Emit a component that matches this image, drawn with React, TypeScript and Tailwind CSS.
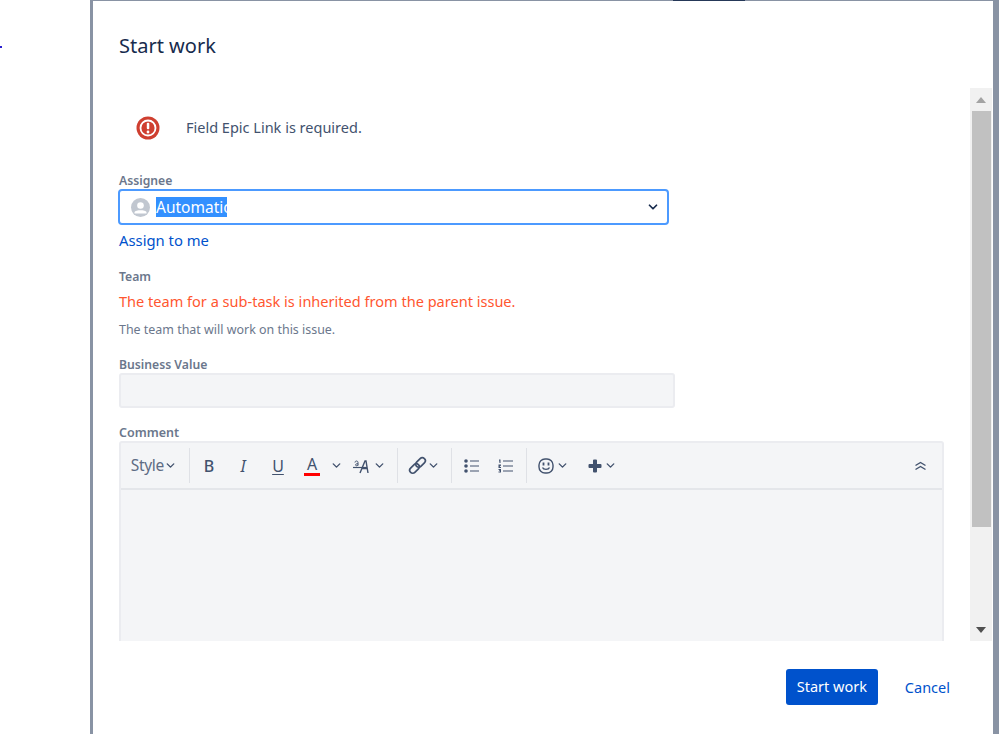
import { ChevronDown } from 'lucide-react'

const font = { fontFamily: '"Noto Sans", "Open Sans", sans-serif' }

function Chev({ className = '' }: { className?: string }) {
  return <ChevronDown className={`w-[13px] h-[13px] text-[#42526e] ${className}`} strokeWidth={2.6} />
}

function Sep() {
  return <div className="w-[1px] h-[35px] bg-[#dfe1e6]" />
}

function Toolbar() {
  return (
    <div className="h-[47px] flex items-center border-b-2 border-[#e4e6ea] text-[#42526e]">
      <div className="w-[68px] flex items-center justify-end pr-[12px]">
        <span className="text-[15.500px] text-[#5e6c84] tracking-[-0.3px]">Style</span>
        <Chev />
      </div>
      <Sep />
      <div className="w-[38px] text-center text-[16px] font-medium">B</div>
      <div className="w-[30px] text-center text-[16px] italic">I</div>
      <div className="w-[40px] text-center text-[16px] underline underline-offset-2">U</div>
      <div className="flex flex-col items-center w-[28px]">
        <span className="text-[16px] leading-[18px]">A</span>
        <div className="w-[16px] h-[3px] bg-[#ff0000]" />
      </div>
      <Chev className="ml-[4px]" />
      <div className="ml-[9px] w-[24px] flex items-center">
        <svg width="24" height="18" viewBox="0 0 24 18" fill="none" stroke="#42526e">
          <path d="M3 5.500c0-2 3-2 3 0v3M6 6.800c-3-.5-3 2-1.400 2 .7 0 1.400-.5 1.400-1" strokeWidth="1" />
          <path d="M1 10.500h14" strokeWidth="1.200" />
          <path d="M8 16l5-12h1l2 12M10 11.500h5" strokeWidth="1.400" />
        </svg>
      </div>
      <Chev className="-ml-[3px]" />
      <div className="ml-[11px]"><Sep /></div>
      <svg className="ml-[10px]" width="19" height="19" viewBox="0 0 19 19" fill="none" stroke="#42526e" strokeWidth="1.700">
        <rect x="1" y="9.500" width="11" height="6" rx="3" transform="rotate(-45 6.500 12.500)" />
        <rect x="7" y="3.500" width="11" height="6" rx="3" transform="rotate(-45 12.500 6.500)" />
      </svg>
      <Chev />
      <div className="ml-[11px]"><Sep /></div>
      <svg className="ml-[12px]" width="16" height="14" viewBox="0 0 16 14" fill="#42526e">
        <circle cx="2" cy="2" r="1.800" />
        <circle cx="2" cy="7" r="1.800" />
        <circle cx="2" cy="12" r="1.800" />
        <path d="M6 1.500h9v1H6zM6 6.500h9v1H6zM6 11.500h9v1H6z" />
      </svg>
      <svg className="ml-[18px]" width="16" height="14" viewBox="0 0 16 14" fill="#42526e">
        <path d="M1 .5h1.500v3.500h-1zM0.500 5.500h2.500v1l-1.500 1.500h1.500v1H.5zM.5 10h2.500v3.500H.5v-1h1.500v-.4H1v-.8h1v-.3H.5z" />
        <path d="M5 1.500h10v1H5zM5 6.500h10v1H5zM5 11.500h10v1H5z" />
      </svg>
      <div className="ml-[12px]"><Sep /></div>
      <svg className="ml-[11px]" width="16" height="16" viewBox="0 0 16 16" fill="none" stroke="#42526e" strokeWidth="1.400">
        <rect x="1" y="1" width="14" height="14" rx="6" />
        <path d="M5.500 4.500v3M10.500 4.500v3" strokeWidth="1.800" />
        <path d="M4.500 9.500c1 2.500 6 2.500 7 0" />
      </svg>
      <Chev className="ml-[2px]" />
      <svg className="ml-[19px]" width="14" height="14" viewBox="0 0 14 14" fill="#42526e">
        <path d="M5 1.500a1 1 0 0 1 1-1h2a1 1 0 0 1 1 1V5h3.500a1 1 0 0 1 1 1v2a1 1 0 0 1-1 1H9v3.500a1 1 0 0 1-1 1H6a1 1 0 0 1-1-1V9H1.500a1 1 0 0 1-1-1V6a1 1 0 0 1 1-1H5z" />
      </svg>
      <Chev className="ml-[2px]" />
      <div className="ml-auto mr-[15px]">
        <svg width="13" height="10" viewBox="0 0 13 10" fill="none" stroke="#42526e" strokeWidth="1.400">
          <path d="M1.500 4.500L6.500 1.500l5 3M1.500 8.500l5-3 5 3" />
        </svg>
      </div>
    </div>
  )
}

function Scrollbar() {
  return (
    <div className="w-[22px] h-full bg-[#f1f1f1] flex flex-col items-center">
      <div className="h-[23px] flex items-center justify-center">
        <div className="w-0 h-0 border-x-[5px] border-x-transparent border-b-[6px] border-b-[#a3a3a3]" />
      </div>
      <div className="w-[19px] h-[416px] bg-[#c1c1c1]" />
      <div className="mt-auto h-[23px] flex items-center justify-center">
        <div className="w-0 h-0 border-x-[5px] border-x-transparent border-t-[6px] border-t-[#505050]" />
      </div>
    </div>
  )
}

export default function App() {
  return (
    <div className="w-[999px] h-[734px] bg-white flex overflow-hidden relative" style={font}>
      <div className="w-[90px] h-full relative">
        <div className="absolute left-0 top-[46px] w-[2px] h-[2px] bg-[#2a1fd0]" />
      </div>
      <div className="w-[3px] h-full bg-[#8993a4]" />
      <div className="w-[900px] h-full flex flex-col bg-white rounded-t-[3px] mt-[1px]">
        <div className="h-[87px] pl-[26px] pt-[29px]">
          <h1 className="text-[20px] leading-[32px] text-[#172b4d]">Start work</h1>
        </div>
        <div className="h-[553px] flex">
          <div className="w-[877px] pl-[26px] overflow-hidden">
            <div className="h-[67px] flex items-center pl-[17px] pt-[12px]">
              <svg width="24" height="24" viewBox="0 0 24 24">
                <circle cx="12" cy="12" r="11.500" fill="#cf3f30" />
                <circle cx="12" cy="12" r="7.500" fill="none" stroke="#fff" strokeWidth="1.800" />
                <rect x="10.800" y="6.800" width="2.500" height="6.500" rx="1" fill="#fff" />
                <circle cx="12" cy="16" r="1.400" fill="#fff" />
              </svg>
              <span className="ml-[26px] text-[14.500px] text-[#42526e]">Field Epic Link is required.</span>
            </div>
            <div className="mt-[18px] text-[12.200px] leading-[16px] font-semibold text-[#6b778c]">Assignee</div>
            <div className="w-[551px] h-[36px] -ml-[1px] border-2 border-[#4c9aff] rounded-[4px] flex items-center pl-[11px] pr-[7px]">
              <svg width="19" height="19" viewBox="0 0 19 19">
                <circle cx="9.500" cy="9.500" r="9.500" fill="#c1c7d0" />
                <circle cx="9.500" cy="7.500" r="3.300" fill="#fff" />
                <path d="M3.500 14c1-2.500 11-2.500 12 0v1.500h-12z" fill="#fff" />
              </svg>
              <span className="ml-[6px] -mt-[1px] h-[20px] w-[71px] overflow-hidden bg-[#3390ff] text-white text-[15.500px] leading-[20px] whitespace-nowrap">Automatic</span>
              <ChevronDown className="ml-auto w-[14px] h-[14px] text-[#172b4d]" strokeWidth={3} />
            </div>
            <div className="mt-[6px] -translate-y-[1px] text-[14.800px] leading-[20px] text-[#0052cc]">Assign to me</div>
            <div className="mt-[18px] text-[12.200px] leading-[16px] font-semibold text-[#6b778c]">Team</div>
            <div className="mt-[6px] text-[14.550px] leading-[20px] text-[#ff5630]">The team for a sub-task is inherited from the parent issue.</div>
            <div className="mt-[11px] text-[12.450px] leading-[16px] text-[#6b778c]">The team that will work on this issue.</div>
            <div className="mt-[19px] text-[12.200px] leading-[16px] font-semibold text-[#6b778c]">Business Value</div>
            <div className="w-[556px] h-[35px] bg-[#f4f5f7] border-2 border-[#ebecf0] rounded-[3px]" />
            <div className="mt-[17px] text-[12.500px] leading-[16px] font-semibold text-[#6b778c]">Comment</div>
            <div className="w-[825px] h-[300px] bg-[#f4f5f7] border-2 border-[#ebecf0] rounded-t-[3px]">
              <Toolbar />
            </div>
          </div>
          <Scrollbar />
        </div>
        <div className="flex-1 flex items-start justify-end pt-[28px] pr-[43px]">
          <button className="w-[92px] h-[36px] bg-[#0052cc] rounded-[3px] text-white text-[14.500px]">Start work</button>
          <span className="ml-[27px] leading-[36px] text-[14.500px] text-[#0052cc]">Cancel</span>
        </div>
      </div>
      <div className="w-[6px] h-full bg-[#8993a4]" />
      <div className="absolute left-0 top-0 w-full h-[1px] pointer-events-none">
        <div className="absolute left-[93px] right-0 top-0 h-[1px] bg-[#8993a4]" />
        <div className="absolute left-[673px] w-[72px] top-0 h-[1px] bg-[#253858]" />
      </div>
    </div>
  )
}
